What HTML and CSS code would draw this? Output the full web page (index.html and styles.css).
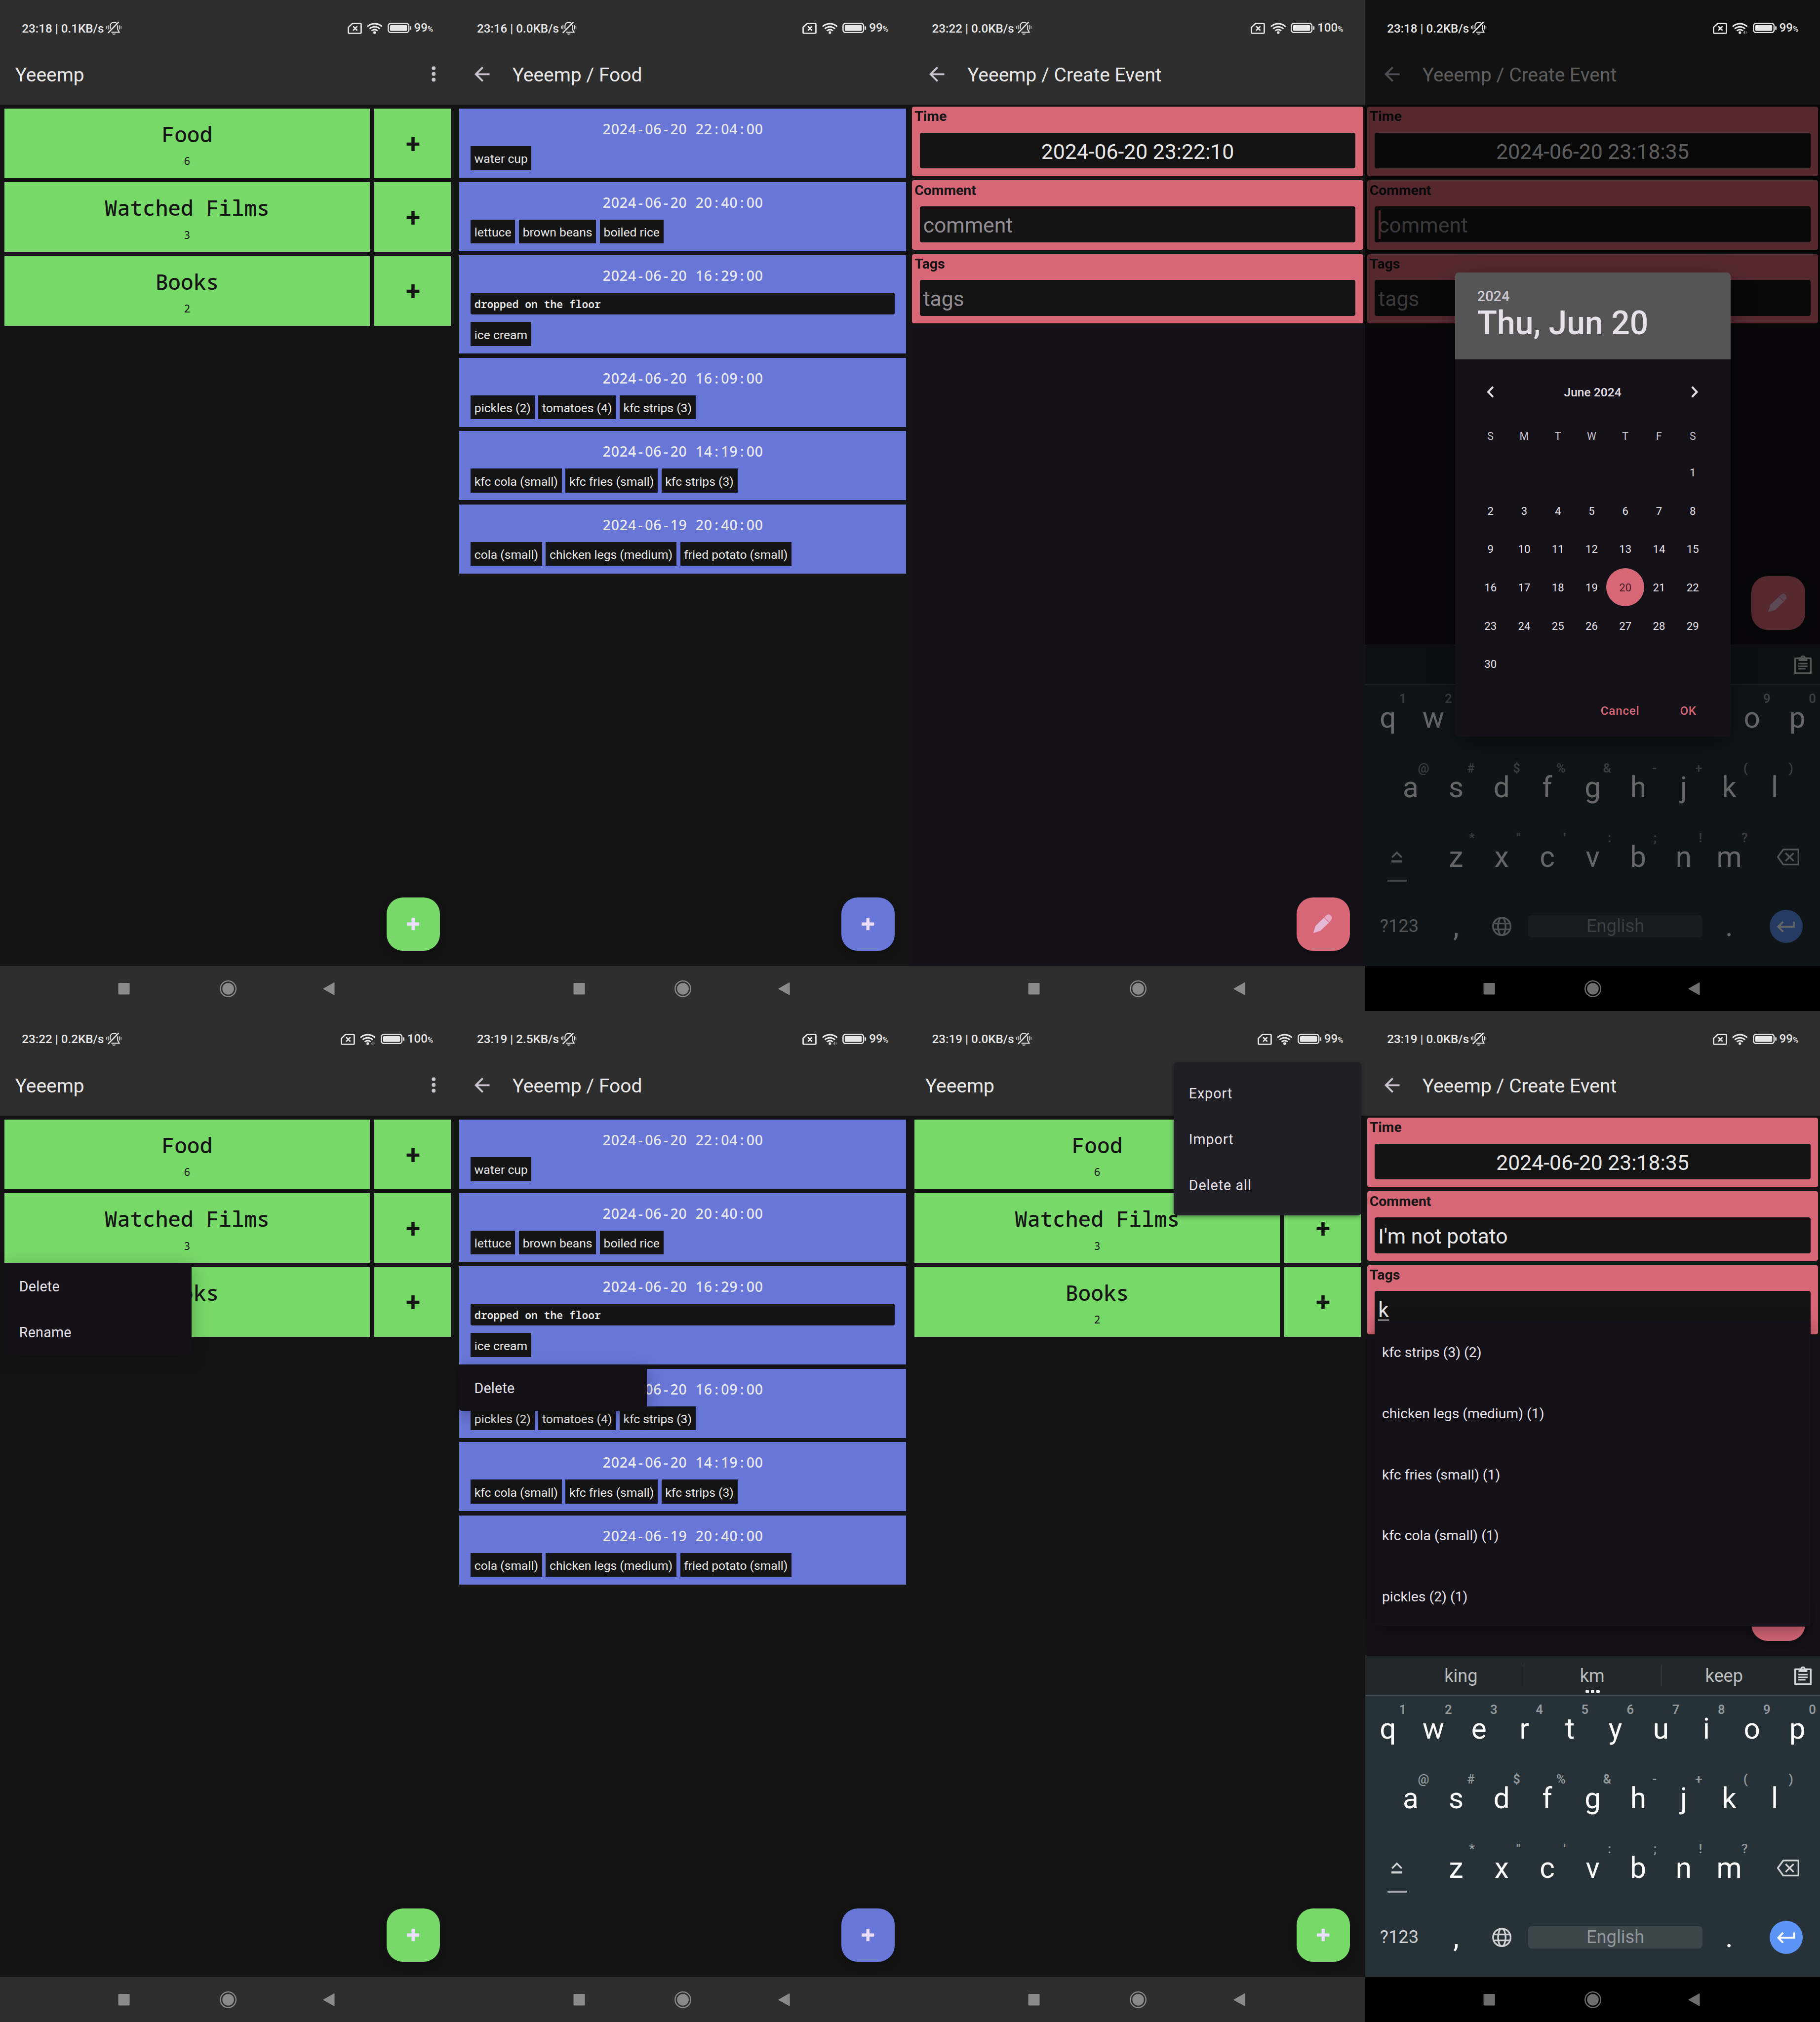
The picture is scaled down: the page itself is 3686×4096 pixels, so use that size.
FILE: index.html
```html
<!DOCTYPE html>
<html lang="en">
<head>
<meta charset="utf-8">
<title>Yeeemp</title>
<link rel="stylesheet" href="styles.css">
</head>
<body>
<svg class="sprite" xmlns="http://www.w3.org/2000/svg">
  <symbol id="bell" viewBox="0 0 37 31"><g fill="none" stroke="currentColor" stroke-linecap="round" stroke-width="2.4"><path stroke-width="1.9" d="M1.2 11.2v4.6M4.8 9.2v8.4M32.2 9.2v8.4M35.8 11.2v4.6"/><path d="M9.8 16V10a8.7 8.7 0 0 1 14-7"/><path d="M27.2 9.5V18l4 6.8H13.5"/><path stroke-width="2.9" d="M5.2 26 29 1.6"/></g><path fill="currentColor" d="M13.8 28.2h9.4a4.9 3.2 0 0 1-9.4 0z"/></symbol>
  <symbol id="sim" viewBox="0 0 34 27"><path fill="none" stroke="currentColor" stroke-width="3.2" stroke-linejoin="round" d="M11.5 1.8H30a2.2 2.2 0 0 1 2.2 2.2V23a2.2 2.2 0 0 1-2.2 2.2H4A2.2 2.2 0 0 1 1.8 23V11z"/><path stroke="currentColor" stroke-width="3.2" d="m13 8.5 10 10m0-10-10 10"/></symbol>
  <symbol id="wifi" viewBox="0 0 37 28"><g fill="none" stroke="currentColor" stroke-width="3.6"><path d="M1.2 10.4a25 25 0 0 1 34.6 0"/><path d="M6.4 15.6a17.6 17.6 0 0 1 24.2 0"/><path d="M11.4 20.4a10.4 10.4 0 0 1 14.2 0"/></g><circle cx="18.5" cy="24.6" r="3.2" fill="currentColor"/></symbol>
  <symbol id="wifi-data" viewBox="0 0 37 28"><g fill="none" stroke="currentColor" stroke-width="3.6"><path d="M1.2 10.4a25 25 0 0 1 34.6 0"/><path d="M6.4 15.6a17.6 17.6 0 0 1 24.2 0"/><path d="M11.4 20.4a10.4 10.4 0 0 1 14.2 0"/></g><circle cx="18.5" cy="24.6" r="3.2" fill="currentColor"/><path fill="currentColor" d="M29.6 21v7l-3.4-3.6h2V21z"/><path fill="currentColor" opacity=".5" d="M32.4 28v-7.4l3.6 3.8h-2.2V28z"/></symbol>
  <symbol id="battery" viewBox="0 0 57 25"><rect x="1.6" y="1.6" width="48.8" height="21.8" rx="6" fill="none" stroke="currentColor" stroke-width="3"/><rect x="5.8" y="5.8" width="40.2" height="13.4" rx="2" fill="currentColor"/><rect x="53" y="8.6" width="3.5" height="8" rx="1.2" fill="currentColor"/></symbol>
  <symbol id="back" viewBox="0 0 36 36"><path fill="currentColor" d="M36 15.8v4.4H8.6l12.6 12.6L18 36 0 18 18 0l3.2 3.2L8.6 15.8z"/></symbol>
  <symbol id="dots" viewBox="0 0 10 37"><circle cx="5" cy="4.8" r="4.6" fill="currentColor"/><circle cx="5" cy="18.5" r="4.6" fill="currentColor"/><circle cx="5" cy="32.2" r="4.6" fill="currentColor"/></symbol>
  <symbol id="plus" viewBox="0 0 30 30"><path fill="currentColor" d="M12.2 0h5.6a1 1 0 0 1 1 1v10.2H29a1 1 0 0 1 1 1v5.6a1 1 0 0 1-1 1H18.8V29a1 1 0 0 1-1 1h-5.6a1 1 0 0 1-1-1V18.8H1a1 1 0 0 1-1-1v-5.6a1 1 0 0 1 1-1h10.2V1a1 1 0 0 1 1-1z"/></symbol>
  <symbol id="pencil" viewBox="0 0 46 46"><path fill="currentColor" d="M0 45.500 5 28.500 25.500 8.500l12.500 12L17 40z"/><path fill="currentColor" opacity=".82" d="M26.500 7.500 32 2.500q5-4.500 10 .5t1.500 10.500L39 19.500z"/></symbol>
  <symbol id="recent" viewBox="0 0 40 42"><rect x="6.500" y="7" width="27" height="27.500" rx="2" fill="currentColor"/></symbol>
  <symbol id="home" viewBox="0 0 40 42"><circle cx="20" cy="21" r="18.500" fill="none" stroke="currentColor" stroke-width="2.800"/><circle cx="20" cy="21" r="13.800" fill="currentColor"/></symbol>
  <symbol id="prev" viewBox="0 0 40 42"><path fill="currentColor" stroke="currentColor" stroke-width="2" stroke-linejoin="round" d="M7.500 21 32.500 7v28z"/></symbol>
  <symbol id="chev" viewBox="0 0 17 28"><path fill="none" stroke="currentColor" stroke-width="4.600" d="M15 2 3.500 14 15 26"/></symbol>
  <symbol id="clip" viewBox="0 0 41 45"><path fill="none" stroke="currentColor" stroke-width="4" stroke-linejoin="round" d="M2 7.500h37V43H2z"/><path fill="currentColor" fill-rule="evenodd" d="M10 14V5.500h4.500a6.200 6.200 0 0 1 12 0H31V14zM20.500 4a2 2 0 1 0 0 4 2 2 0 0 0 0-4z"/><path stroke="currentColor" stroke-width="3.400" d="M9.500 20.200h22M9.500 26.600h22M9.500 32.500h17"/></symbol>
  <symbol id="shift" viewBox="0 0 26 28"><path fill="none" stroke="currentColor" stroke-width="4" d="M1.500 15 13 3.500 24.500 15"/><path fill="currentColor" d="M0 22h26v5.200H0z"/></symbol>
  <symbol id="bksp" viewBox="0 0 54 40"><path fill="none" stroke="currentColor" stroke-width="4" stroke-linejoin="round" d="M16 2h36v36H16L3 20z"/><path stroke="currentColor" stroke-width="4" d="m21.500 10.500 19 19m0-19-19 19"/></symbol>
  <symbol id="globe" viewBox="0 0 46 46"><g fill="none" stroke="currentColor" stroke-width="4"><circle cx="23" cy="23" r="20.800"/><ellipse cx="23" cy="23" rx="9" ry="20.800"/><path d="M4 16h38M4 30h38"/></g></symbol>
  <symbol id="enter" viewBox="0 0 44 28"><path fill="none" stroke="currentColor" stroke-width="4.400" d="M41.500 2v12.500H5M15.500 2.500 4 14.500l11.500 12"/></symbol>
</svg>

<main class="gallery">

  <section class="phone">
    <header class="top">
      <div class="status"><span class="clock">23:18 | 0.1KB/s</span><svg class="i-bell"><use href="#bell"/></svg><span class="fill"></span><svg class="i-sim"><use href="#sim"/></svg><svg class="i-wifi"><use href="#wifi"/></svg><svg class="i-batt"><use href="#battery"/></svg><span class="pct">99<small>%</small></span></div>
      <div class="appbar"><h1>Yeeemp</h1><svg class="i-dots"><use href="#dots"/></svg></div>
    </header>
    <div class="body groups">
      <div class="group"><div class="g-main"><b>Food</b><i>6</i></div><div class="g-add">+</div></div>
      <div class="group"><div class="g-main"><b>Watched Films</b><i>3</i></div><div class="g-add">+</div></div>
      <div class="group"><div class="g-main"><b>Books</b><i>2</i></div><div class="g-add">+</div></div>
      <div class="fab green"><svg class="i-plus"><use href="#plus"/></svg></div>
    </div>
    <nav class="nav"><svg><use href="#recent"/></svg><svg><use href="#home"/></svg><svg><use href="#prev"/></svg></nav>
  </section>

  <section class="phone">
    <header class="top">
      <div class="status"><span class="clock">23:16 | 0.0KB/s</span><svg class="i-bell"><use href="#bell"/></svg><span class="fill"></span><svg class="i-sim"><use href="#sim"/></svg><svg class="i-wifi"><use href="#wifi"/></svg><svg class="i-batt"><use href="#battery"/></svg><span class="pct">99<small>%</small></span></div>
      <div class="appbar"><svg class="i-back"><use href="#back"/></svg><h1>Yeeemp / Food</h1></div>
    </header>
    <div class="body events">
      <article class="event"><time>2024<s>-</s>06<s>-</s>20 22<u>:</u>04<u>:</u>00</time><div class="tags"><span>water cup</span></div></article>
      <article class="event"><time>2024<s>-</s>06<s>-</s>20 20<u>:</u>40<u>:</u>00</time><div class="tags"><span>lettuce</span><span>brown beans</span><span>boiled rice</span></div></article>
      <article class="event"><time>2024<s>-</s>06<s>-</s>20 16<u>:</u>29<u>:</u>00</time><p class="note">dropped on the floor</p><div class="tags"><span>ice cream</span></div></article>
      <article class="event"><time>2024<s>-</s>06<s>-</s>20 16<u>:</u>09<u>:</u>00</time><div class="tags"><span>pickles (2)</span><span>tomatoes (4)</span><span>kfc strips (3)</span></div></article>
      <article class="event"><time>2024<s>-</s>06<s>-</s>20 14<u>:</u>19<u>:</u>00</time><div class="tags"><span>kfc cola (small)</span><span>kfc fries (small)</span><span>kfc strips (3)</span></div></article>
      <article class="event"><time>2024<s>-</s>06<s>-</s>19 20<u>:</u>40<u>:</u>00</time><div class="tags"><span>cola (small)</span><span>chicken legs (medium)</span><span>fried potato (small)</span></div></article>
      <div class="fab blue"><svg class="i-plus"><use href="#plus"/></svg></div>
    </div>
    <nav class="nav"><svg><use href="#recent"/></svg><svg><use href="#home"/></svg><svg><use href="#prev"/></svg></nav>
  </section>

  <section class="phone violet">
    <header class="top">
      <div class="status"><span class="clock">23:22 | 0.0KB/s</span><svg class="i-bell"><use href="#bell"/></svg><span class="fill"></span><svg class="i-sim"><use href="#sim"/></svg><svg class="i-wifi"><use href="#wifi"/></svg><svg class="i-batt"><use href="#battery"/></svg><span class="pct">100<small>%</small></span></div>
      <div class="appbar"><svg class="i-back"><use href="#back"/></svg><h1>Yeeemp / Create Event</h1></div>
    </header>
    <div class="body">
      <form class="fields">
        <div class="field"><label>Time</label><div class="input center">2024-06-20 23:22:10</div></div>
        <div class="field"><label>Comment</label><div class="input hint">comment</div></div>
        <div class="field"><label>Tags</label><div class="input hint">tags</div></div>
      </form>
      <div class="fab pink"><svg class="i-pencil"><use href="#pencil"/></svg></div>
    </div>
    <nav class="nav"><svg><use href="#recent"/></svg><svg><use href="#home"/></svg><svg><use href="#prev"/></svg></nav>
  </section>

  <section class="phone violet">
    <header class="top">
      <div class="status"><span class="clock">23:18 | 0.2KB/s</span><svg class="i-bell"><use href="#bell"/></svg><span class="fill"></span><svg class="i-sim"><use href="#sim"/></svg><svg class="i-wifi"><use href="#wifi-data"/></svg><svg class="i-batt"><use href="#battery"/></svg><span class="pct">99<small>%</small></span></div>
      <div class="appbar"><svg class="i-back"><use href="#back"/></svg><h1>Yeeemp / Create Event</h1></div>
    </header>
    <div class="body">
      <form class="fields">
        <div class="field"><label>Time</label><div class="input center">2024-06-20 23:18:35</div></div>
        <div class="field"><label>Comment</label><div class="input hint caret">comment</div></div>
        <div class="field"><label>Tags</label><div class="input hint">tags</div></div>
      </form>
      <div class="fab pink"><svg class="i-pencil"><use href="#pencil"/></svg></div>
    </div>
    <div class="keyboard">
      <div class="strip"><span></span><span></span><span></span><svg class="i-clip"><use href="#clip"/></svg></div>
      <div class="krow"><kbd>q<sup>1</sup></kbd><kbd>w<sup>2</sup></kbd><kbd></kbd><kbd></kbd><kbd></kbd><kbd></kbd><kbd></kbd><kbd></kbd><kbd>o<sup>9</sup></kbd><kbd>p<sup>0</sup></kbd></div>
      <div class="krow"><kbd>a<sup>@</sup></kbd><kbd>s<sup>#</sup></kbd><kbd>d<sup>$</sup></kbd><kbd>f<sup>%</sup></kbd><kbd>g<sup>&amp;</sup></kbd><kbd>h<sup>-</sup></kbd><kbd>j<sup>+</sup></kbd><kbd>k<sup>(</sup></kbd><kbd>l<sup>)</sup></kbd></div>
      <div class="krow"><kbd class="wide k-shift"><svg class="i-shift"><use href="#shift"/></svg></kbd><kbd>z<sup>*</sup></kbd><kbd>x<sup>"</sup></kbd><kbd>c<sup>'</sup></kbd><kbd>v<sup>:</sup></kbd><kbd>b<sup>;</sup></kbd><kbd>n<sup>!</sup></kbd><kbd>m<sup>?</sup></kbd><kbd class="wide k-bksp"><svg class="i-bksp"><use href="#bksp"/></svg></kbd></div>
      <div class="krow"><kbd class="wide k-sym">?123</kbd><kbd>,</kbd><kbd><svg class="i-globe"><use href="#globe"/></svg></kbd><kbd class="k-space"><span>English</span></kbd><kbd>.</kbd><kbd class="wide"><span class="k-enter"><svg class="i-enter"><use href="#enter"/></svg></span></kbd></div>
    </div>
    <nav class="nav black"><svg><use href="#recent"/></svg><svg><use href="#home"/></svg><svg><use href="#prev"/></svg></nav>
    <div class="scrim"></div>
    <div class="picker">
      <div class="p-head"><div class="p-year">2024</div><div class="p-date">Thu, Jun 20</div></div>
      <div class="p-month"><svg class="i-chev"><use href="#chev"/></svg><span>June 2024</span><svg class="i-chev flip"><use href="#chev"/></svg></div>
      <div class="p-week"><span>S</span><span>M</span><span>T</span><span>W</span><span>T</span><span>F</span><span>S</span></div>
      <div class="p-days">
        <span class="first">1</span>
        <span>2</span><span>3</span><span>4</span><span>5</span><span>6</span><span>7</span><span>8</span>
        <span>9</span><span>10</span><span>11</span><span>12</span><span>13</span><span>14</span><span>15</span>
        <span>16</span><span>17</span><span>18</span><span>19</span><span class="on">20</span><span>21</span><span>22</span>
        <span>23</span><span>24</span><span>25</span><span>26</span><span>27</span><span>28</span><span>29</span>
        <span>30</span>
      </div>
      <div class="p-actions"><span>Cancel</span><span>OK</span></div>
    </div>
  </section>

  <section class="phone">
    <header class="top">
      <div class="status"><span class="clock">23:22 | 0.2KB/s</span><svg class="i-bell"><use href="#bell"/></svg><span class="fill"></span><svg class="i-sim"><use href="#sim"/></svg><svg class="i-wifi"><use href="#wifi-data"/></svg><svg class="i-batt"><use href="#battery"/></svg><span class="pct">100<small>%</small></span></div>
      <div class="appbar"><h1>Yeeemp</h1><svg class="i-dots"><use href="#dots"/></svg></div>
    </header>
    <div class="body groups">
      <div class="group"><div class="g-main"><b>Food</b><i>6</i></div><div class="g-add">+</div></div>
      <div class="group"><div class="g-main"><b>Watched Films</b><i>3</i></div><div class="g-add">+</div></div>
      <div class="group"><div class="g-main"><b>Books</b></div><div class="g-add">+</div></div>
      <div class="fab green"><svg class="i-plus"><use href="#plus"/></svg></div>
    </div>
    <nav class="nav"><svg><use href="#recent"/></svg><svg><use href="#home"/></svg><svg><use href="#prev"/></svg></nav>
    <div class="menu at-group"><div>Delete</div><div>Rename</div></div>
  </section>

  <section class="phone">
    <header class="top">
      <div class="status"><span class="clock">23:19 | 2.5KB/s</span><svg class="i-bell"><use href="#bell"/></svg><span class="fill"></span><svg class="i-sim"><use href="#sim"/></svg><svg class="i-wifi"><use href="#wifi-data"/></svg><svg class="i-batt"><use href="#battery"/></svg><span class="pct">99<small>%</small></span></div>
      <div class="appbar"><svg class="i-back"><use href="#back"/></svg><h1>Yeeemp / Food</h1></div>
    </header>
    <div class="body events">
      <article class="event"><time>2024<s>-</s>06<s>-</s>20 22<u>:</u>04<u>:</u>00</time><div class="tags"><span>water cup</span></div></article>
      <article class="event"><time>2024<s>-</s>06<s>-</s>20 20<u>:</u>40<u>:</u>00</time><div class="tags"><span>lettuce</span><span>brown beans</span><span>boiled rice</span></div></article>
      <article class="event"><time>2024<s>-</s>06<s>-</s>20 16<u>:</u>29<u>:</u>00</time><p class="note">dropped on the floor</p><div class="tags"><span>ice cream</span></div></article>
      <article class="event"><time>2024<s>-</s>06<s>-</s>20 16<u>:</u>09<u>:</u>00</time><div class="tags"><span>pickles (2)</span><span>tomatoes (4)</span><span>kfc strips (3)</span></div></article>
      <article class="event"><time>2024<s>-</s>06<s>-</s>20 14<u>:</u>19<u>:</u>00</time><div class="tags"><span>kfc cola (small)</span><span>kfc fries (small)</span><span>kfc strips (3)</span></div></article>
      <article class="event"><time>2024<s>-</s>06<s>-</s>19 20<u>:</u>40<u>:</u>00</time><div class="tags"><span>cola (small)</span><span>chicken legs (medium)</span><span>fried potato (small)</span></div></article>
      <div class="fab blue"><svg class="i-plus"><use href="#plus"/></svg></div>
    </div>
    <nav class="nav"><svg><use href="#recent"/></svg><svg><use href="#home"/></svg><svg><use href="#prev"/></svg></nav>
    <div class="menu at-event"><div>Delete</div></div>
  </section>

  <section class="phone">
    <header class="top">
      <div class="status"><span class="clock">23:19 | 0.0KB/s</span><svg class="i-bell"><use href="#bell"/></svg><span class="fill"></span><svg class="i-sim"><use href="#sim"/></svg><svg class="i-wifi"><use href="#wifi"/></svg><svg class="i-batt"><use href="#battery"/></svg><span class="pct">99<small>%</small></span></div>
      <div class="appbar"><h1>Yeeemp</h1></div>
    </header>
    <div class="body groups">
      <div class="group"><div class="g-main"><b>Food</b><i>6</i></div><div class="g-add"></div></div>
      <div class="group"><div class="g-main"><b>Watched Films</b><i>3</i></div><div class="g-add">+</div></div>
      <div class="group"><div class="g-main"><b>Books</b><i>2</i></div><div class="g-add">+</div></div>
      <div class="fab green"><svg class="i-plus"><use href="#plus"/></svg></div>
    </div>
    <nav class="nav"><svg><use href="#recent"/></svg><svg><use href="#home"/></svg><svg><use href="#prev"/></svg></nav>
    <div class="menu overflow"><div>Export</div><div>Import</div><div>Delete all</div></div>
  </section>

  <section class="phone violet">
    <header class="top">
      <div class="status"><span class="clock">23:19 | 0.0KB/s</span><svg class="i-bell"><use href="#bell"/></svg><span class="fill"></span><svg class="i-sim"><use href="#sim"/></svg><svg class="i-wifi"><use href="#wifi"/></svg><svg class="i-batt"><use href="#battery"/></svg><span class="pct">99<small>%</small></span></div>
      <div class="appbar"><svg class="i-back"><use href="#back"/></svg><h1>Yeeemp / Create Event</h1></div>
    </header>
    <div class="body">
      <form class="fields">
        <div class="field"><label>Time</label><div class="input center">2024-06-20 23:18:35</div></div>
        <div class="field"><label>Comment</label><div class="input">I'm not potato</div></div>
        <div class="field"><label>Tags</label><div class="input"><span class="typed">k</span></div></div>
      </form>
      <div class="fab pink"></div>
      <div class="suggest"><div>kfc strips (3) (2)</div><div>chicken legs (medium) (1)</div><div>kfc fries (small) (1)</div><div>kfc cola (small) (1)</div><div>pickles (2) (1)</div></div>
    </div>
    <div class="keyboard">
      <div class="strip"><span>king</span><span class="mid">km</span><span>keep</span><svg class="i-clip"><use href="#clip"/></svg></div>
      <div class="krow"><kbd>q<sup>1</sup></kbd><kbd>w<sup>2</sup></kbd><kbd>e<sup>3</sup></kbd><kbd>r<sup>4</sup></kbd><kbd>t<sup>5</sup></kbd><kbd>y<sup>6</sup></kbd><kbd>u<sup>7</sup></kbd><kbd>i<sup>8</sup></kbd><kbd>o<sup>9</sup></kbd><kbd>p<sup>0</sup></kbd></div>
      <div class="krow"><kbd>a<sup>@</sup></kbd><kbd>s<sup>#</sup></kbd><kbd>d<sup>$</sup></kbd><kbd>f<sup>%</sup></kbd><kbd>g<sup>&amp;</sup></kbd><kbd>h<sup>-</sup></kbd><kbd>j<sup>+</sup></kbd><kbd>k<sup>(</sup></kbd><kbd>l<sup>)</sup></kbd></div>
      <div class="krow"><kbd class="wide k-shift"><svg class="i-shift"><use href="#shift"/></svg></kbd><kbd>z<sup>*</sup></kbd><kbd>x<sup>"</sup></kbd><kbd>c<sup>'</sup></kbd><kbd>v<sup>:</sup></kbd><kbd>b<sup>;</sup></kbd><kbd>n<sup>!</sup></kbd><kbd>m<sup>?</sup></kbd><kbd class="wide k-bksp"><svg class="i-bksp"><use href="#bksp"/></svg></kbd></div>
      <div class="krow"><kbd class="wide k-sym">?123</kbd><kbd>,</kbd><kbd><svg class="i-globe"><use href="#globe"/></svg></kbd><kbd class="k-space"><span>English</span></kbd><kbd>.</kbd><kbd class="wide"><span class="k-enter"><svg class="i-enter"><use href="#enter"/></svg></span></kbd></div>
    </div>
    <nav class="nav black"><svg><use href="#recent"/></svg><svg><use href="#home"/></svg><svg><use href="#prev"/></svg></nav>
  </section>

</main>
</body>
</html>
```

FILE: styles.css
```css
/* 1rem = 10 device pixels of a 1080x2400 phone screen */
:root {
  font-size: 8.53333px;
  --green: #77d968;
  --blue: #6876d7;
  --pink: #d76777;
  --ink: #141414;
  --bar: #2e2e2e;
  --surface: #141118;
  --light: #e8e8e8;
}

* { box-sizing: border-box; }
body { margin: 0; background: var(--ink); font-family: Roboto, sans-serif; color: var(--light); overflow: hidden; }
svg { display: block; flex: none; }
.sprite { position: absolute; width: 0; height: 0; }

.gallery { display: grid; grid-template-columns: repeat(4, 108rem); grid-auto-rows: 240rem; width: 432rem; }
.phone { position: relative; display: flex; flex-direction: column; background: var(--ink); overflow: hidden; }
.phone.violet { background: var(--surface); }

/* status bar and title */
.top { height: 24.8rem; background: var(--bar); flex: none; }
.status { position: relative; z-index: 3; display: flex; align-items: center; height: 10.4rem; padding: 3.1rem 5.2rem 0 5.2rem; font-weight: 500; font-size: 2.835rem; line-height: 3.4rem; white-space: pre; }
.fill { flex: 1; }
.i-bell { width: 3.7rem; height: 3.1rem; margin-left: .5rem; }
.i-sim { width: 3.4rem; height: 2.7rem; margin-right: 1.2rem; }
.i-wifi { width: 3.7rem; height: 2.8rem; margin-right: 1.2rem; margin-bottom: .2rem; }
.i-batt { width: 5.7rem; height: 2.5rem; margin-right: .6rem; margin-bottom: .3rem; }
.clock, .pct { padding-top: .1rem; }
.pct small { font-size: 1.77rem; }
.appbar { display: flex; align-items: center; height: 14.4rem; padding: 0 4.55rem 0 3.6rem; }
.appbar h1 { flex: 1; margin: 0; padding-top: .3rem; font-size: 4.56rem; font-weight: 400; line-height: 6rem; }
.i-back { width: 3.6rem; height: 3.6rem; margin: 0 5.4rem 0 1rem; color: #cac4d0; }
.i-dots { width: 1rem; height: 3.7rem; color: #cac4d0; }

.body { position: relative; flex: 1; min-height: 0; }

/* groups */
.groups { display: flex; flex-direction: column; gap: 1rem; padding: 1rem; }
.group { display: grid; grid-template-columns: 86.8rem 18.2rem; gap: 1rem; height: 16.5rem; color: var(--ink); }
.g-main, .g-add { background: var(--green); }
.g-main { display: flex; flex-direction: column; align-items: center; padding-top: 2.8rem; font-family: "Noto Sans Mono", monospace; }
.g-main b { font-size: 5.02rem; font-weight: 500; line-height: 6.6rem; white-space: pre; }
.g-main i { font-size: 2.5rem; font-style: normal; line-height: 6.2rem; }
.g-add { display: flex; align-items: center; justify-content: center; padding: .35rem 0 0 .25rem; font-size: 6.2rem; font-weight: 600; line-height: 6.2rem; }

/* events */
.events { display: flex; flex-direction: column; gap: 1rem; padding: 1rem; }
.event { padding: .8rem 2.7rem 1.8rem; background: var(--blue); }
.event time { display: block; padding: .15rem 0 0 .2rem; text-align: center; font-family: "Noto Sans", sans-serif; font-size: 3.34rem; font-weight: 500; line-height: 7.95rem; letter-spacing: .0284em; word-spacing: .311em; }
.event time s { padding: 0 .125em; text-decoration: none; }
.event time u { padding: 0 .152em; text-decoration: none; }
.tags { display: flex; gap: .9rem; }
.tags span { height: 5.7rem; padding: .4rem .9rem 0; background: var(--ink); font-size: 2.89rem; line-height: 5.3rem; }
.note { height: 5.2rem; margin: 0 0 1.75rem; padding: .1rem 0 0 .9rem; border-radius: .4rem; background: var(--ink); font: 600 2.5rem/5.1rem "Noto Sans Mono", monospace; }

/* form */
.fields { display: flex; flex-direction: column; gap: 1rem; padding: .5rem; background: var(--ink); }
.field { display: flex; flex-direction: column; height: 16.5rem; padding: .4rem 1.8rem 1.8rem; border-radius: .5rem; background: var(--pink); }
.field label { margin: 0 0 1.7rem -1.25rem; color: var(--ink); font-size: 3.33rem; font-weight: 700; line-height: 4.1rem; }
.input { position: relative; height: 8.5rem; padding: .45rem .8rem 0; border-radius: .5rem; background: var(--ink); font-size: 5rem; line-height: 8.05rem; }
.input.center { text-align: center; }
.input.hint { color: #918d92; }
.caret::before { content: ""; position: absolute; left: .9rem; top: .9rem; width: .5rem; height: 6.8rem; background: var(--pink); }
.typed { display: inline-block; height: 5.05rem; margin-top: 1.5rem; border-bottom: .25rem solid #e6e1e9; line-height: 5rem; vertical-align: top; }

/* floating button */
.fab { position: absolute; right: 3.6rem; bottom: 3.6rem; display: flex; align-items: center; justify-content: center; width: 12.7rem; height: 12.7rem; border-radius: 3.9rem; color: #eaddff; box-shadow: 0 .8rem 2rem rgba(0, 0, 0, .28); }
.fab.green { background: var(--green); }
.fab.blue { background: var(--blue); }
.fab.pink { background: var(--pink); }
.i-plus { width: 3rem; height: 3rem; }
.i-pencil { width: 4.5rem; height: 4.5rem; margin: 0 .2rem .2rem 0; opacity: .7; }

/* navigation bar */
.nav { display: flex; align-items: center; flex: none; height: 10.7rem; padding: .1rem 0 0 27.45rem; background: var(--bar); color: #8a8a8a; }
.nav svg { width: 4rem; height: 4.2rem; }
.nav svg + svg { margin-left: 20.65rem; }
.nav svg:last-child { margin-left: 20rem; }
.nav.black { position: relative; background: #000; color: #6e6e6e; z-index: 2; }

/* popup menus */
.menu { position: absolute; width: 44.5rem; background: var(--surface); color: #e6e1e9; font-size: 3.35rem; letter-spacing: .03rem; box-shadow: 0 1rem 4rem rgba(0, 0, 0, .26); border-radius: .6rem; }
.menu div { height: 10.93rem; padding: .3rem 3.55rem 0; line-height: 10.63rem; }
.at-group { left: 1rem; top: 59.8rem; }
.at-event { left: 1rem; top: 84rem; }
.overflow { left: 62.6rem; top: 12.15rem; padding: 1.8rem 0; border-radius: .8rem; background: #211f26; letter-spacing: .12rem; box-shadow: 0 .3rem 1rem rgba(0, 0, 0, .4); }

.suggest { position: absolute; left: 2.3rem; right: 2.3rem; top: 48.8rem; background: var(--surface); color: #e6e1e9; font-size: 3.32rem; box-shadow: 0 1rem 4rem rgba(0, 0, 0, .35); border-radius: .5rem; }
.suggest div { height: 14.5rem; padding: .5rem 1.7rem 0; line-height: 14rem; }

/* keyboard */
.keyboard { height: 76.2rem; flex: none; background: #263238; color: #fff; }
.strip { display: grid; grid-template-columns: 29.3rem 33rem 29.6rem 7.8rem; align-items: center; height: 9.5rem; padding-left: 8.1rem; border-top: .2rem solid #373d40; border-bottom: .4rem solid #3c474c; background: #22272a; font-size: 4.23rem; color: #bdbec0; }
.strip span { position: relative; height: 5.2rem; text-align: center; line-height: 5.5rem; }
.strip .mid { border-left: .2rem solid #3f4548; border-right: .2rem solid #3f4548; }
.mid::after { content: ""; position: absolute; left: 50%; top: 6.05rem; width: .75rem; height: .75rem; margin-left: -.3rem; border-radius: 50%; background: #fff; box-shadow: -1.27rem 0 #fff, 1.27rem 0 #fff; }
.i-clip { width: 4.1rem; height: 4.5rem; justify-self: center; color: #d4d6d7; }
.krow { display: flex; justify-content: center; height: 16.5rem; }
kbd { position: relative; display: flex; align-items: center; justify-content: center; width: 10.8rem; padding-bottom: .9rem; font: 400 6.85rem/8rem Roboto, sans-serif; }
kbd.wide { width: 16.2rem; }
sup { position: absolute; top: 1.75rem; right: 1rem; color: #929a9e; font-size: 3rem; font-weight: 600; line-height: 3.2rem; }
.k-shift::after { content: ""; position: absolute; left: 5.3rem; top: 13.2rem; width: 4.6rem; height: .5rem; background: #a3a9ac; }
.i-shift { width: 2.6rem; height: 2.8rem; margin: 0 1.2rem 0 0; color: #d0d3d5; }
.i-bksp { width: 5.4rem; height: 4rem; margin-left: 1rem; color: #d0d3d5; }
.k-sym { font-size: 4.25rem; color: #d0d3d5; }
.i-globe { width: 4.6rem; height: 4.6rem; color: #d0d3d5; }
.k-space { width: 43.2rem; }
.k-space span { width: 41.4rem; height: 5.3rem; border-radius: .8rem; background: #3c464b; color: #93999c; font-size: 4.25rem; line-height: 5.2rem; text-align: center; }
.k-enter { display: flex; align-items: center; justify-content: center; width: 7.9rem; height: 7.9rem; border-radius: 50%; background: #5c94f6; }
.i-enter { width: 4.4rem; height: 2.8rem; }

/* date picker dialog */
.scrim { position: absolute; inset: 0; z-index: 1; background: rgba(0, 0, 0, .6); }
.picker { position: absolute; z-index: 2; left: 21.3rem; top: 64.7rem; width: 65.4rem; height: 110.2rem; border-radius: .8rem; overflow: hidden; background: var(--surface); color: #e6e1e9; box-shadow: 0 2rem 6rem rgba(0, 0, 0, .4); }
.p-head { height: 20.65rem; padding: 3.25rem 5.3rem 0; background: #555; font-weight: 500; }
.p-year { color: #cac4d0; font-size: 3.38rem; line-height: 4.8rem; }
.p-date { font-size: 7.74rem; line-height: 8rem; }
.p-month { display: flex; align-items: center; justify-content: space-between; height: 15.5rem; padding: 0 7.6rem; font-size: 2.88rem; font-weight: 500; }
.i-chev { width: 1.7rem; height: 2.8rem; }
.flip { transform: scaleX(-1); }
.p-week, .p-days { display: grid; grid-template-columns: repeat(7, 8rem); width: 56rem; margin-left: 4.45rem; text-align: center; }
.p-week { height: 6.75rem; color: #cac4d0; font-size: 2.5rem; line-height: 5.5rem; }
.p-days { grid-auto-rows: 9.1rem; font-size: 2.6rem; line-height: 9.15rem; }
.p-days .first { grid-column: 7; }
.p-days .on { width: 9rem; height: 9rem; margin-left: -.5rem; border-radius: 50%; background: var(--pink); color: #4b1d26; }
.p-actions { display: flex; justify-content: flex-end; gap: 9.6rem; padding: 3.95rem 8.05rem 0 0; color: var(--pink); font-size: 2.84rem; font-weight: 500; letter-spacing: .09rem; line-height: 5.3rem; }
```
